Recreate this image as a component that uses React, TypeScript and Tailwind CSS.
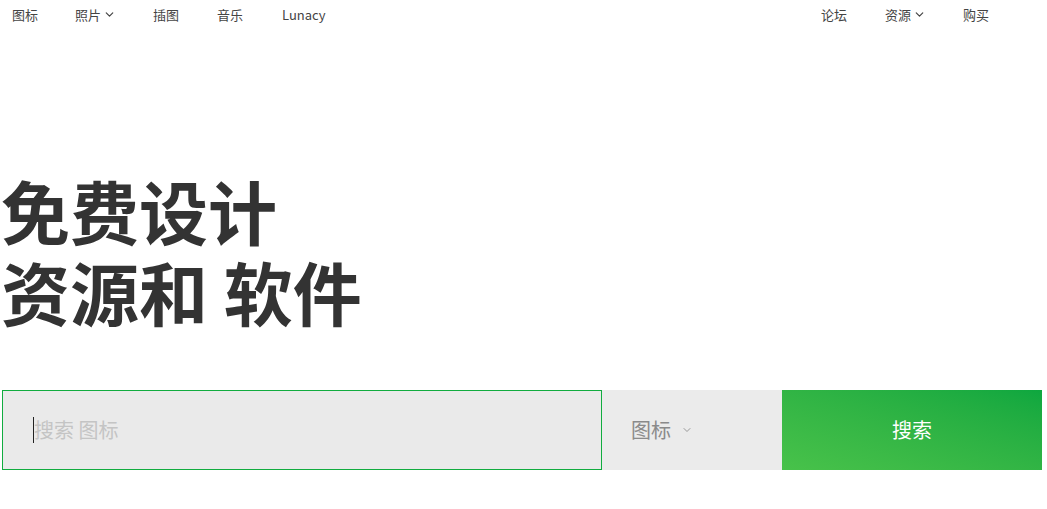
import { ChevronDown } from "lucide-react";

const leftLinks = [
  { label: "图标", drop: false, w: "w-[63px]" },
  { label: "照片", drop: true, w: "w-[78px]" },
  { label: "插图", drop: false, w: "w-[64px]" },
  { label: "音乐", drop: false, w: "w-[65px]" },
  { label: "Lunacy", drop: false, w: "" },
];

const rightLinks = [
  { label: "论坛", drop: false, w: "w-[64px]" },
  { label: "资源", drop: true, w: "w-[78px]" },
  { label: "购买", drop: false, w: "w-[84px]" },
];

const font = "font-['Noto_Sans_CJK_SC','Noto_Sans',sans-serif]";

const NavLink = ({ label, drop, w }: { label: string; drop: boolean; w: string }) => (
  <a className={`flex items-center gap-[2px] ${w}`}>
    <span>{label}</span>
    {drop && <ChevronDown className="h-[13px] w-[13px] text-[#444]" strokeWidth={2.2} />}
  </a>
);

export default function App() {
  return (
    <div className={`min-h-[509px] bg-white ${font} text-[#333]`}>
      {/* Top bar */}
      <header className="flex h-[29px] items-center justify-between pl-3 text-[13px] text-[#444]">
        <nav className="flex items-center">
          {leftLinks.map((l) => (
            <NavLink key={l.label} {...l} />
          ))}
        </nav>
        <nav className="flex items-center">
          {rightLinks.map((l) => (
            <NavLink key={l.label} {...l} />
          ))}
        </nav>
      </header>

      {/* Hero */}
      <section className="pt-[141px] pl-[1px]">
        <h1 className="text-[69px] font-bold leading-[81px] text-[#333]">
          免费设计
          <br />
          资源和 软件
        </h1>

        <div className="mt-[58px] flex h-[80px] w-[1042px] pl-[1px]">
          <div className="flex w-[600px] items-center border border-[#11ac3f] bg-[#eaeaea] pl-[30px]">
            <span className="h-[26px] w-[1px] bg-[#222]" />
            <span className="text-[20px] text-[#c4c4c4]">搜索 图标</span>
          </div>
          <div className="flex w-[180px] items-center bg-[#ebebeb] pl-[29px] text-[20px] text-[#8a8a8a]">
            <span>图标</span>
            <ChevronDown className="ml-[10px] h-3 w-3 text-[#999]" strokeWidth={2} />
          </div>
          <button className="flex w-[260px] items-center justify-center bg-gradient-to-tr from-[#48c24a] to-[#0da73f] text-[20px] text-white">
            搜索
          </button>
        </div>
      </section>
    </div>
  );
}
